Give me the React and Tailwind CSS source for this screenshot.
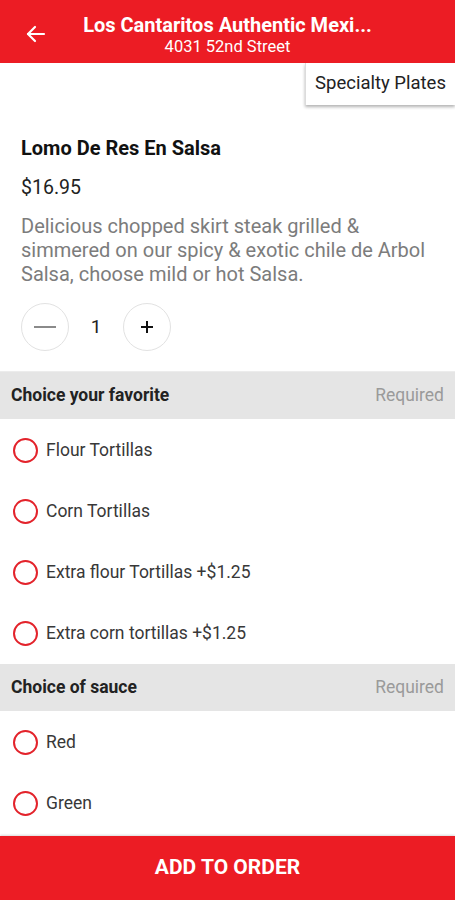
import React from "react";

function Radio({ label }) {
  return (
    <div className="flex h-[61px] items-center pl-[13px]">
      <div className="h-[25px] w-[25px] shrink-0 rounded-full border-2 border-[#e3232b]" />
      <span className="ml-[8px] text-[17.5px] text-[#383838]">{label}</span>
    </div>
  );
}

function Section({ title }) {
  return (
    <div className="flex h-[47px] items-center justify-between bg-[#e5e5e5] pl-[11px] pr-[11px]">
      <span className="text-[17.5px] font-bold text-[#222222]">{title}</span>
      <span className="text-[17.5px] text-[#9a9a9a]">Required</span>
    </div>
  );
}

export default function App() {
  return (
    <div
      className="flex h-[900px] w-[455px] flex-col overflow-hidden bg-white"
      style={{ fontFamily: "Roboto, 'Liberation Sans', sans-serif" }}
    >
      <header className="relative flex h-[63px] shrink-0 items-center bg-[#ec1c24] text-white">
        <div className="absolute left-[24px] top-[22px]">
          <svg width="24" height="24" viewBox="0 0 24 24" fill="none" stroke="white" strokeWidth="2.2" strokeLinecap="round" strokeLinejoin="round">
            <path d="M20 12H4" />
            <path d="M11 5l-7 7 7 7" />
          </svg>
        </div>
        <div className="flex w-full flex-col items-center pt-[6px]">
          <div className="text-[20px] font-bold leading-[24px]">Los Cantaritos Authentic Mexi...</div>
          <div className="text-[16.5px] leading-[20px]">4031 52nd Street</div>
        </div>
      </header>

      <div className="flex-1 overflow-hidden">
        <div className="flex justify-end">
          <div className="flex h-[42px] w-[150px] items-center justify-center border-l border-[#dcdcdc] bg-white text-[18.5px] text-[#222222] shadow-[0_2px_3px_rgba(0,0,0,0.3)]">
            Specialty Plates
          </div>
        </div>

        <div className="pl-[21px] pr-[12px] pt-[29px]">
          <div className="text-[20px] font-bold leading-[28px] text-[#111111]">Lomo De Res En Salsa</div>
          <div className="mt-[14px] text-[19.5px] leading-[24px] text-[#222222]">$16.95</div>
          <div className="mt-[14px] text-[20px] leading-[24px] text-[#7c7c7c]">
            Delicious chopped skirt steak grilled &amp; simmered on our spicy &amp; exotic chile de Arbol Salsa, choose mild or hot Salsa.
          </div>
          <div className="mt-[17px] flex items-center">
            <div className="flex h-[48px] w-[48px] items-center justify-center rounded-full border border-[#e2e2e2]">
              <div className="h-[1.5px] w-[22px] bg-[#8a8a8a]" />
            </div>
            <div className="w-[54px] text-center text-[19px] text-[#222222]">1</div>
            <div className="flex h-[48px] w-[48px] items-center justify-center rounded-full border border-[#e2e2e2]">
              <svg width="14" height="14" viewBox="0 0 14 14" stroke="#111" strokeWidth="2">
                <path d="M7 1v12M1 7h12" />
              </svg>
            </div>
          </div>
        </div>

        <div className="mt-[20px] border-t border-[#ececec]">
          <Section title="Choice your favorite" />
          <div className="pt-[1px]">
            <Radio label="Flour Tortillas" />
            <Radio label="Corn Tortillas" />
            <Radio label="Extra flour Tortillas +$1.25" />
            <Radio label="Extra corn tortillas +$1.25" />
          </div>
          <Section title="Choice of sauce" />
          <div className="pt-[1px]">
            <Radio label="Red" />
            <Radio label="Green" />
          </div>
        </div>
      </div>

      <button className="flex h-[64px] w-full shrink-0 items-center justify-center bg-[#ec1c24] text-[21px] font-bold text-white shadow-[0_-1px_2px_rgba(0,0,0,0.15)]">
        ADD TO ORDER
      </button>
    </div>
  );
}
